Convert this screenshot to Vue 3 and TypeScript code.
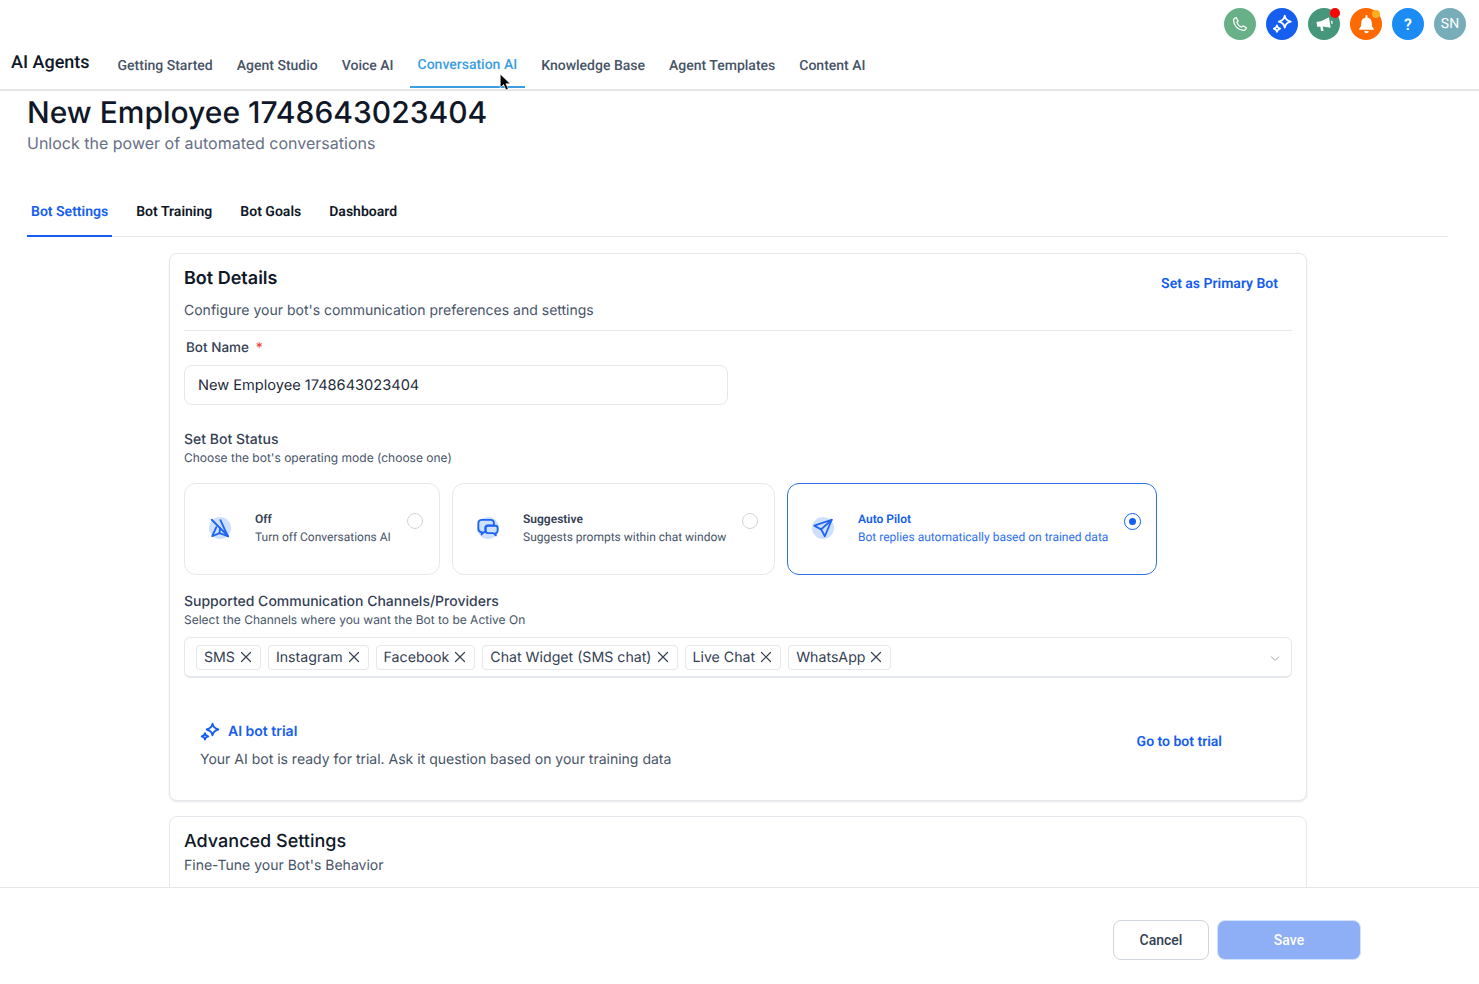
<script setup lang="ts">
const navItems = ['Getting Started', 'Agent Studio', 'Voice AI', 'Conversation AI', 'Knowledge Base', 'Agent Templates', 'Content AI']
const tabs = ['Bot Settings', 'Bot Training', 'Bot Goals', 'Dashboard']
const channels = ['SMS', 'Instagram', 'Facebook', 'Chat Widget (SMS chat)', 'Live Chat', 'WhatsApp']

const modes = [
  { key: 'off', title: 'Off', text: 'Turn off Conversations AI', width: 256 },
  { key: 'suggestive', title: 'Suggestive', text: 'Suggests prompts within chat window', width: 323 },
  { key: 'auto', title: 'Auto Pilot', text: 'Bot replies automatically based on trained data', width: 370 },
]
</script>

<template>
  <div class="page">
    <header class="header">
      <div class="header__top">
        <span class="circle circle--phone">
          <svg viewBox="0 0 24 24" width="18" height="18" fill="none" stroke="#fff" stroke-width="1.6" stroke-linecap="round" stroke-linejoin="round"><path d="M7 3.500 9.500 8 7.800 10c1 2.600 3.400 5 6.200 6.200l2-1.700 4.500 2.500c-.3 2-1.800 3.500-3.800 3.500C10 20.500 3.500 14 3.500 7.300 3.500 5.300 5 3.800 7 3.500Z"/></svg>
        </span>
        <span class="circle circle--spark">
          <svg viewBox="0 0 24 24" width="22" height="22" fill="none" stroke="#fff" stroke-width="1.900" stroke-linejoin="round"><path d="M15 3c.7 3.800 2.400 5.500 6.500 6.500-4.100 1-5.800 2.700-6.500 6.500-.7-3.800-2.400-5.500-6.500-6.500 4.100-1 5.800-2.700 6.500-6.500Z"/><path d="M6.500 13.500c.4 2 1.300 3 3.500 3.500-2.200.5-3.100 1.500-3.500 3.500-.4-2-1.300-3-3.500-3.500 2.200-.5 3.100-1.500 3.500-3.500Z"/></svg>
        </span>
        <span class="circle circle--news">
          <svg viewBox="0 0 24 24" width="20" height="20" fill="#fff"><path d="M3 9.500 9 8.500 18 4l2 12.500-9.500-1.500 1 5-3 .5-1-5.500-3.500.5Z"/><path d="M20.500 8.500l1.500-.3.500 3.500-1.500.3Z"/></svg>
          <i class="dot dot--red"></i>
        </span>
        <span class="circle circle--bell">
          <svg viewBox="0 0 24 24" width="21" height="21" fill="#fff"><path d="M11 1.500h2V4c3.200.5 5 3 5 6.300 0 3.900 1 5.400 2.500 6.700v1h-17v-1C5 15.700 6 14.200 6 10.300 6 7 7.800 4.500 11 4Z"/><path d="M9.500 19.500h5a2.500 2.500 0 0 1-5 0Z"/></svg>
          <i class="dot dot--amber"></i>
        </span>
        <span class="circle circle--help">?</span>
        <span class="circle circle--user">SN</span>
      </div>
      <div class="header__nav">
        <span class="brand">AI Agents</span>
        <nav class="nav">
          <a v-for="item in navItems" :key="item" class="nav__item" :class="{ 'nav__item--active': item === 'Conversation AI' }">{{ item }}</a>
        </nav>
      </div>
      <svg class="cursor" viewBox="0 0 12 18" width="13" height="19"><path d="M1 1v13l3.200-3 2.200 5 2.200-1-2.200-4.800H10.500Z" fill="#000" stroke="#fff" stroke-width=".6"/></svg>
    </header>

    <main class="main">
      <h1 class="title">New Employee 1748643023404</h1>
      <p class="subtitle">Unlock the power of automated conversations</p>

      <div class="tabs">
        <a v-for="tab in tabs" :key="tab" class="tabs__item" :class="{ 'tabs__item--active': tab === 'Bot Settings' }">{{ tab }}</a>
      </div>

      <section class="card card--details">
        <div class="card__head">
          <div>
            <h2 class="card__title card__title--strong">Bot Details</h2>
            <p class="card__desc">Configure your bot's communication preferences and settings</p>
          </div>
          <a class="link link--primary">Set as Primary Bot</a>
        </div>

        <label class="field-label">Bot Name <span class="req">*</span></label>
        <div class="input">New Employee 1748643023404</div>

        <h3 class="group-title group-title--status">Set Bot Status</h3>
        <p class="group-desc">Choose the bot's operating mode (choose one)</p>

        <div class="modes">
          <div
            v-for="mode in modes"
            :key="mode.key"
            class="mode"
            :class="{ 'mode--active': mode.key === 'auto' }"
            :style="{ width: mode.width + 'px' }"
          >
            <span class="mode__icon">
              <svg v-if="mode.key === 'off'" viewBox="0 0 24 24" width="24" height="24" fill="none" stroke="#1d64f0" stroke-width="2" stroke-linecap="round" stroke-linejoin="round"><path d="M3 3l18 18"/><path d="M12.500 3.500 20.500 21 11.500 17.500 3.500 21 8 11"/><path d="M11.500 17.500 12 12"/></svg>
              <svg v-else-if="mode.key === 'suggestive'" viewBox="0 0 24 24" width="25" height="25" fill="none" stroke="#1d64f0" stroke-width="2" stroke-linejoin="round"><path d="M5 2.500h10a3.500 3.500 0 0 1 3.500 3.500v2.500H12a3 3 0 0 0-3 3V16H7.500L5 18.500V15.800A3.500 3.500 0 0 1 1.500 12.500V6A3.500 3.500 0 0 1 5 2.500Z"/><path d="M12 9h8A2.500 2.500 0 0 1 22.500 11.500v3A2.500 2.500 0 0 1 20.500 17v2.500L18 17h-6a2.500 2.500 0 0 1-2.500-2.500v-3A2.500 2.500 0 0 1 12 9Z"/></svg>
              <svg v-else viewBox="0 0 24 24" width="24" height="24" fill="none" stroke="#1d64f0" stroke-width="2" stroke-linecap="round" stroke-linejoin="round"><path d="M21.500 3 2.500 9.500l7.500 4 4 7.500Z"/><path d="M21.500 3 10 13.500"/></svg>
            </span>
            <div class="mode__body">
              <div class="mode__title">{{ mode.title }}</div>
              <div class="mode__text">{{ mode.text }}</div>
            </div>
            <span class="radio" :class="{ 'radio--on': mode.key === 'auto' }"></span>
          </div>
        </div>

        <h3 class="group-title group-title--channels">Supported Communication Channels/Providers</h3>
        <p class="group-desc">Select the Channels where you want the Bot to be Active On</p>

        <div class="select">
          <span v-for="channel in channels" :key="channel" class="tag">
            {{ channel }}
            <svg viewBox="0 0 12 12" width="12" height="12" fill="none" stroke="#374151" stroke-width="1.200" stroke-linecap="round"><path d="M1.500 1.500l9 9M10.500 1.500l-9 9"/></svg>
          </span>
          <svg class="select__chevron" viewBox="0 0 12 12" width="12" height="12" fill="none" stroke="#9ca3af" stroke-width="1"><path d="M2 4.500l4 4 4-4"/></svg>
        </div>

        <div class="trial">
          <div>
            <div class="trial__title">
              <svg viewBox="0 0 24 24" width="20" height="20" fill="none" stroke="#155eef" stroke-width="2.200" stroke-linejoin="round"><path d="M15 2c.7 4 2.500 5.800 7 7-4.500 1.200-6.300 3-7 7-.7-4-2.500-5.800-7-7 4.500-1.200 6.300-3 7-7Z"/><path d="M6 13.500c.4 2.200 1.400 3.200 4 3.800-2.600.6-3.600 1.600-4 3.700-.4-2.100-1.400-3.100-4-3.700 2.600-.6 3.600-1.600 4-3.800Z"/></svg>
              AI bot trial
            </div>
            <p class="trial__text">Your AI bot is ready for trial. Ask it question based on your training data</p>
          </div>
          <a class="link link--trial">Go to bot trial</a>
        </div>
      </section>

      <section class="card card--advanced">
        <h2 class="card__title">Advanced Settings</h2>
        <p class="card__sub">Fine-Tune your Bot's Behavior</p>
      </section>
    </main>

    <footer class="footer">
      <button class="btn btn--cancel">Cancel</button>
      <button class="btn btn--save">Save</button>
    </footer>
  </div>
</template>

<style>
html, body {
  margin: 0;
  background: #fff;
}
</style>

<style scoped>
.page {
  display: flex;
  flex-direction: column;
  height: 984px;
  overflow: hidden;
  font-family: Inter, "Liberation Sans", sans-serif;
  color: #344054;
  text-rendering: geometricPrecision;
}

.header {
  position: relative;
  flex: none;
  height: 91px;
  box-sizing: border-box;
  border-bottom: 2px solid #e5e7eb;
}

.header__top {
  display: flex;
  justify-content: flex-end;
  gap: 10px;
  padding: 8px 13px 0 0;
  height: 32px;
}

.circle {
  position: relative;
  display: flex;
  align-items: center;
  justify-content: center;
  width: 32px;
  height: 32px;
  border-radius: 50%;
  color: #fff;
  font-family: Roboto, sans-serif;
  font-size: 14px;
}
.circle--phone { background: #68b088; }
.circle--spark { background: #155eef; }
.circle--news { background: #45967a; }
.circle--bell { background: #ff6a00; }
.circle--help { background: #1c8cf5; font-size: 16px; font-weight: 600; }
.circle--user { background: #76adb9; }

.dot {
  position: absolute;
  top: 0;
  right: 0;
  width: 10px;
  height: 10px;
  border-radius: 50%;
}
.dot--red { background: #f00; }
.dot--amber { width: 8px; height: 8px; top: 2px; right: 2px; background: #fdb022; }

.header__nav {
  display: flex;
  align-items: flex-end;
  height: 48px;
  padding-left: 11px;
}

.brand {
  margin-right: 20px;
  padding-bottom: 14px;
  font-size: 18px;
  font-weight: 500;
  line-height: 22px;
  color: #101828;
  font-family: Roboto, sans-serif;
}

.nav {
  display: flex;
  gap: 8px;
}

.nav__item {
  padding: 3px 8px 0;
  height: 35px;
  font-family: Roboto, sans-serif;
  font-size: 14px;
  font-weight: 500;
  line-height: 20px;
  color: #475467;
  box-sizing: border-box;
}

.nav__item--active {
  padding-top: 2px;
  color: #3b9ee0;
  border-bottom: 2px solid #3b9ee0;
}

.cursor {
  position: absolute;
  left: 499px;
  top: 73px;
}

.main {
  flex: 1;
  min-height: 0;
  overflow: hidden;
  padding: 0 31px 0 27px;
}

.title {
  margin: 3px 0 0;
  font-size: 30px;
  font-weight: 500;
  line-height: 38px;
  color: #101828;
}

.subtitle {
  margin: 0;
  font-size: 16px;
  line-height: 22px;
  color: #667085;
}

.tabs {
  display: flex;
  gap: 20px;
  margin-top: 39px;
  border-bottom: 1px solid #e5e7eb;
}

.tabs__item {
  padding: 9px 4px 14px;
  font-family: Roboto, sans-serif;
  font-size: 14px;
  font-weight: 600;
  line-height: 20px;
  letter-spacing: 0.01px;
  color: #101828;
  margin-bottom: -1px;
}

.tabs__item--active {
  color: #155eef;
  border-bottom: 2px solid #155eef;
  padding-bottom: 13px;
}

.card {
  box-sizing: border-box;
  width: 1138px;
  margin-left: 142px;
  border: 1px solid #e4e7ec;
  border-radius: 8px;
  background: #fff;
}

.card--details {
  height: 548px;
  margin-top: 16px;
  padding: 12px 14px 0;
  box-shadow: 0 1px 2px rgba(16, 24, 40, 0.1);
}

.card--advanced {
  margin-top: 15px;
  height: 120px;
  padding: 12px 14px;
}

.card__head {
  display: flex;
  justify-content: space-between;
  border-bottom: 1px solid #e5e7eb;
  padding-bottom: 9px;
}

.card__title {
  margin: 0;
  font-size: 18px;
  font-weight: 500;
  line-height: 26px;
  color: #101828;
}

.card__title--strong {
  font-weight: 600;
}

.card__desc {
  margin: 9px 0 0;
  font-size: 14px;
  line-height: 20px;
  color: #475467;
}

.card__sub {
  margin: 1px 0 0;
  font-size: 14px;
  line-height: 20px;
  color: #475467;
}

.link {
  font-family: Roboto, sans-serif;
  font-size: 14px;
  font-weight: 600;
  line-height: 20px;
  color: #155eef;
}

.link--primary {
  margin: 8px 14px 0 0;
}

.link--trial {
  margin-bottom: 6px;
}

.field-label {
  display: block;
  margin: 7px 0 0 2px;
  font-size: 13.5px;
  font-weight: 500;
  line-height: 20px;
  color: #344054;
}

.req {
  margin-left: 3px;
  color: #f04438;
}

.input {
  box-sizing: border-box;
  width: 544px;
  height: 40px;
  margin-top: 7px;
  padding: 0 13px;
  border: 1px solid #e4e7ec;
  border-radius: 8px;
  font-size: 14.6px;
  line-height: 38px;
  color: #1d2939;
}

.group-title {
  margin: 0;
  font-size: 14px;
  font-weight: 500;
  line-height: 19px;
  color: #344054;
}

.group-title--status { margin-top: 25px; }
.group-title--channels { margin-top: 17px; }

.group-desc {
  margin: 0;
  font-size: 12px;
  line-height: 18px;
  color: #475467;
}

.modes {
  display: flex;
  gap: 12px;
  margin-top: 16px;
}

.mode {
  position: relative;
  display: flex;
  box-sizing: border-box;
  height: 92px;
  padding: 26px 0 0 24px;
  border: 1px solid #e4e7ec;
  border-radius: 12px;
}

.mode--active {
  border-color: #2f6fed;
}

.mode__icon {
  flex: none;
  display: flex;
  align-items: center;
  justify-content: center;
  width: 22px;
  height: 22px;
  margin: 7px 24px 0 0;
  border-radius: 50%;
  background: #cfe0fc;
}

.mode__body {
  font-family: Roboto, sans-serif;
  font-size: 12px;
  line-height: 18px;
  color: #475467;
}

.mode__title {
  font-weight: 600;
  color: #344054;
}

.mode--active .mode__title {
  color: #155eef;
}

.mode--active .mode__text {
  color: #2f6fed;
}

.radio {
  position: absolute;
  top: 29px;
  right: 16px;
  box-sizing: border-box;
  width: 16px;
  height: 16px;
  border: 1px solid #d0d5dd;
  border-radius: 50%;
}

.radio--on {
  right: 15px;
  width: 17px;
  height: 17px;
  border-color: #155eef;
  display: flex;
  align-items: center;
  justify-content: center;
}

.radio--on::after {
  content: '';
  width: 7px;
  height: 7px;
  border-radius: 50%;
  background: #155eef;
}

.select {
  position: relative;
  display: flex;
  align-items: center;
  gap: 7px;
  box-sizing: border-box;
  height: 41px;
  margin-top: 8px;
  padding: 0 11px;
  border: 1px solid #e4e7ec;
  border-bottom-width: 2px;
  border-radius: 6px;
}

.select__chevron {
  position: absolute;
  right: 10px;
  top: 14px;
}

.tag {
  display: flex;
  align-items: center;
  gap: 5px;
  box-sizing: border-box;
  height: 25px;
  padding: 0 8px 0 7px;
  border: 1px solid #e4e7ec;
  border-radius: 4px;
  font-size: 14.17px;
  color: #344054;
}

.trial {
  display: flex;
  justify-content: space-between;
  align-items: center;
  margin-top: 42px;
  padding: 0 70px 0 16px;
}

.trial__title {
  display: flex;
  align-items: center;
  gap: 8px;
  font-size: 14px;
  font-weight: 600;
  line-height: 24px;
  color: #155eef;
}

.trial__text {
  margin: 6px 0 0;
  font-size: 14px;
  line-height: 20px;
  color: #475467;
}

.footer {
  flex: none;
  display: flex;
  justify-content: flex-end;
  gap: 8px;
  box-sizing: border-box;
  height: 97px;
  padding: 32px 118px 0 0;
  border-top: 1px solid #e5e7eb;
  background: #fff;
}

.btn {
  height: 40px;
  border-radius: 8px;
  font-family: Roboto, sans-serif;
  font-size: 14px;
  font-weight: 500;
}

.btn--cancel {
  width: 96px;
  border: 1px solid #d0d5dd;
  background: #fff;
  color: #344054;
}

.btn--save {
  width: 144px;
  border: 1px solid #d1e0ff;
  background: #8eaef6;
  color: #fff;
}
</style>
